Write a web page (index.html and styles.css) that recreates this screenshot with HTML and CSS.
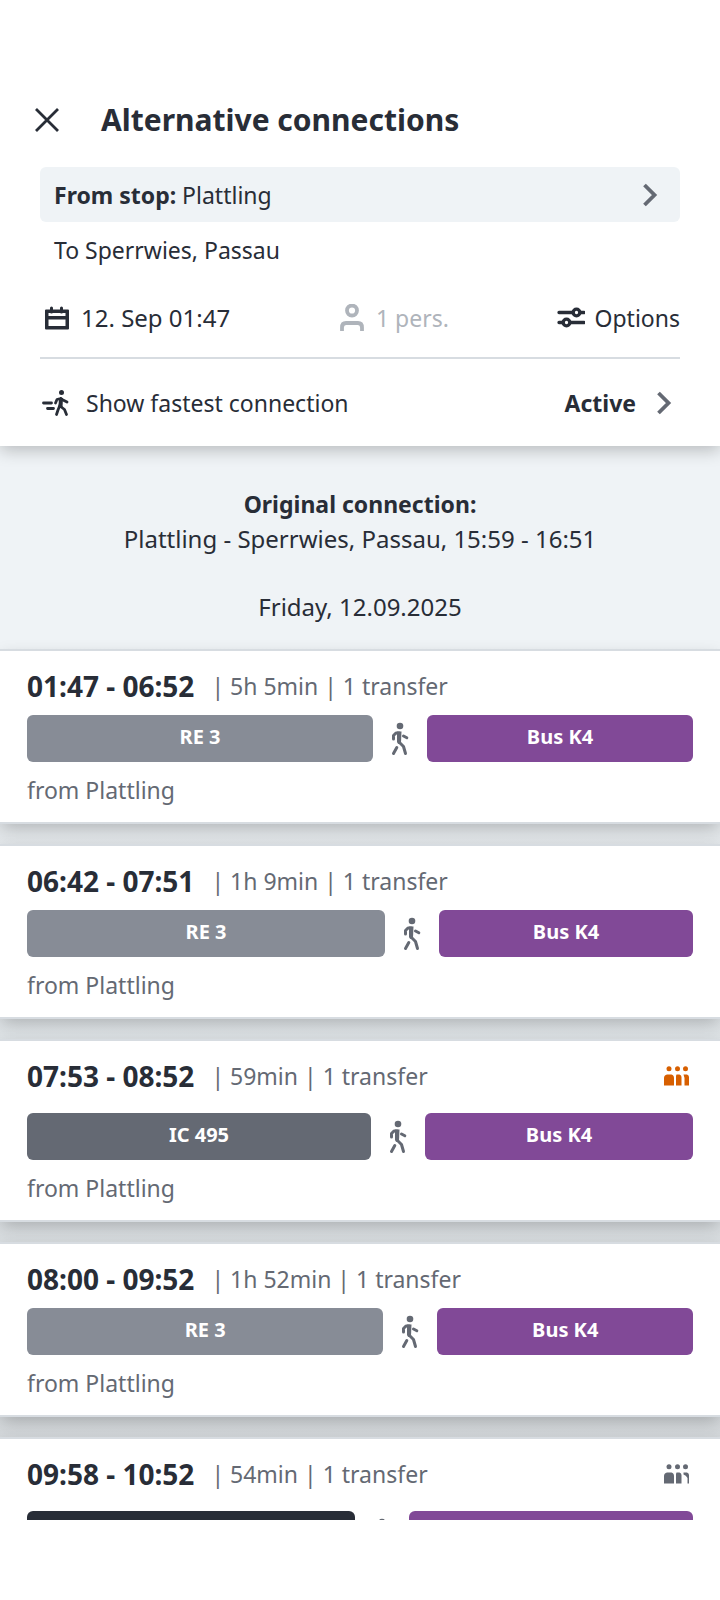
FILE: index.html
```html
<!DOCTYPE html>
<html lang="en">
<head>
<meta charset="utf-8">
<meta name="viewport" content="width=device-width, initial-scale=1">
<title>Alternative connections</title>
<link rel="stylesheet" href="styles.css">
</head>
<body>
<svg class="sprite" aria-hidden="true">
  <symbol id="walk" viewBox="0 0 18 34">
    <circle cx="9" cy="4" r="3.3"/>
    <g fill="none" stroke="currentColor" stroke-width="3" stroke-linecap="round" stroke-linejoin="round">
      <path d="M2.500 17V13.500L5 11H8.500"/><path d="M12.500 14L15.800 15.800"/><path d="M5.800 25.500L2.500 31.500"/><path d="M8.500 20.500L12.500 24.500L14.500 31.500"/>
    </g>
    <path d="M6 9.500H10.500L10 20.500L8.500 22H7.500Q6 21 6 19.500Z"/>
  </symbol>
  <symbol id="chevron" viewBox="0 0 24 24"><path d="M6.500 2L16.500 12L6.500 22" fill="none" stroke="currentColor" stroke-width="3.800"/></symbol>
  <symbol id="load-medium" viewBox="0 0 26 20">
    <circle cx="5" cy="2.700" r="2.500"/><circle cx="13.500" cy="2.700" r="2.500"/><circle cx="21.500" cy="2.700" r="2.500"/>
    <path d="M3 8.500H7.500Q10 9 10 12V19.500H0V12Q0 9 3 8.500ZM12.500 8.500H15.500Q17.500 9 17.500 11V19.500H12V10ZM19.500 8.500H23Q25 9 25 11V19.500H20.500V12Z"/>
  </symbol>
  <symbol id="load-low" viewBox="0 0 26 20">
    <circle cx="5" cy="2.700" r="2.500"/><circle cx="13.500" cy="2.700" r="2.500"/><circle cx="21.500" cy="2.700" r="2.500"/>
    <path d="M3 8.500H7.500Q10 9 10 12V19.500H0V12Q0 9 3 8.500ZM12.500 8.500H15.500Q17.500 9 17.500 11V19.500H12V10ZM19.500 8.500H23Q25 9 25 11V19.500H23.500V14Q22 11 19.500 10.500Z"/>
  </symbol>
</svg>
<div class="screen">
  <header class="search">
    <div class="title-bar">
      <button class="close" type="button" aria-label="Close"><svg class="icon-close" viewBox="0 0 24 24"><path d="M1 1L23 23M23 1L1 23" fill="none" stroke="currentColor" stroke-width="2.800"/></svg></button>
      <h1>Alternative connections</h1>
    </div>
    <div class="form">
      <button class="from" type="button"><span><b>From stop:</b> Plattling</span><svg class="chevron"><use href="#chevron"/></svg></button>
      <p class="to">To Sperrwies, Passau</p>
      <div class="settings">
        <button class="setting date" type="button">
          <svg class="icon" viewBox="0 0 28 28"><path d="M8.500 4V8M18.500 4V8" stroke="currentColor" stroke-width="3" stroke-linecap="round"/><path fill-rule="evenodd" d="M3 5.500H25Q26 5.500 26 6.500V24.500Q26 25.500 25 25.500H3Q2 25.500 2 24.500V6.500Q2 5.500 3 5.500ZM5.500 9V12H22.500V9ZM5.500 15.500V22H22.500V15.500Z"/></svg>
          12. Sep 01:47</button>
        <button class="setting" type="button" disabled>
          <svg class="icon" viewBox="0 0 28 28"><g fill="none" stroke="currentColor" stroke-width="3.800"><circle cx="14" cy="6.500" r="5"/><path d="M4 27V23.500Q4 19 8 19H20Q24 19 24 23.500V27"/></g></svg>
          1 pers.</button>
        <button class="setting" type="button">
          <svg class="icon" viewBox="0 0 28 28"><g fill="none" stroke="currentColor" stroke-width="3.300" stroke-linecap="round"><path d="M2 8.500H16M24 8.500H27M2 18.500H6M14 18.500H27"/><circle cx="19.500" cy="8.500" r="3.300"/><circle cx="9.500" cy="18.500" r="3.300"/></g></svg>
          Options</button>
      </div>
      <button class="fastest" type="button">
        <svg class="icon" viewBox="0 0 28 28"><circle cx="19.500" cy="3.500" r="2.500"/><g fill="none" stroke="currentColor" stroke-width="2.800" stroke-linecap="round" stroke-linejoin="round"><path d="M1.500 14H9.500M5.500 19.500H11.500"/><path d="M13.500 14L15 10.500L18.500 9.500L21 11L25 13M19 9.500L18 17L22.500 20.500L24.500 25.500M18 16L16 21L14.500 25.500"/></g><path d="M17 9H21L20.500 18H16.500Z"/></svg>
        <span class="fastest-label">Show fastest connection</span><b>Active</b>
        <svg class="chevron"><use href="#chevron"/></svg>
      </button>
    </div>
  </header>
  <main class="results">
    <div class="original">
      <h2>Original connection:</h2>
      <p>Plattling - Sperrwies, Passau, 15:59 - 16:51</p>
      <p class="day">Friday, 12.09.2025</p>
    </div>
    <article class="card">
      <div class="summary"><b>01:47 - 06:52</b><span>| 5h 5min | 1 transfer</span></div>
      <div class="legs"><span class="leg regional" style="flex-grow:346">RE 3</span><svg class="walk"><use href="#walk"/></svg><span class="leg bus" style="flex-grow:266">Bus K4</span></div>
      <p class="origin">from Plattling</p>
    </article>
    <article class="card">
      <div class="summary"><b>06:42 - 07:51</b><span>| 1h 9min | 1 transfer</span></div>
      <div class="legs"><span class="leg regional" style="flex-grow:358">RE 3</span><svg class="walk"><use href="#walk"/></svg><span class="leg bus" style="flex-grow:254">Bus K4</span></div>
      <p class="origin">from Plattling</p>
    </article>
    <article class="card with-load">
      <div class="summary"><b>07:53 - 08:52</b><span>| 59min | 1 transfer</span><svg class="load high"><use href="#load-medium"/></svg></div>
      <div class="legs"><span class="leg intercity" style="flex-grow:344">IC 495</span><svg class="walk"><use href="#walk"/></svg><span class="leg bus" style="flex-grow:268">Bus K4</span></div>
      <p class="origin">from Plattling</p>
    </article>
    <article class="card">
      <div class="summary"><b>08:00 - 09:52</b><span>| 1h 52min | 1 transfer</span></div>
      <div class="legs"><span class="leg regional" style="flex-grow:357">RE 3</span><svg class="walk"><use href="#walk"/></svg><span class="leg bus" style="flex-grow:256">Bus K4</span></div>
      <p class="origin">from Plattling</p>
    </article>
    <article class="card with-load">
      <div class="summary"><b>09:58 - 10:52</b><span>| 54min | 1 transfer</span><svg class="load"><use href="#load-low"/></svg></div>
      <div class="legs"><span class="leg express" style="flex-grow:328"></span><svg class="walk"><use href="#walk"/></svg><span class="leg bus" style="flex-grow:284"></span></div>
    </article>
  </main>
</div>
</body>
</html>
```
FILE: styles.css
```css
* { box-sizing: border-box; }
body {
  margin: 0;
  background: #fff;
  color: #282d37;
  font-family: "Noto Sans", "Open Sans", sans-serif;
  font-size: 23px;
  line-height: 32px;
}
h1, h2, p { margin: 0; }
button {
  padding: 0;
  border: 0;
  background: none;
  color: inherit;
  font: inherit;
  text-align: left;
}
svg { display: block; flex: none; fill: currentColor; }
.sprite { position: absolute; width: 0; height: 0; }
.screen {
  display: flex;
  flex-direction: column;
  height: 100vh;
  padding: 80px 0;
}
.search {
  position: relative;
  z-index: 1;
  flex: none;
  background: #fff;
  box-shadow: 0 4px 16px rgba(0, 0, 0, .24);
  clip-path: inset(0 0 -32px 0);
}
.title-bar {
  display: flex;
  align-items: center;
  gap: 42px;
  height: 80px;
  padding: 0 35px;
}
.icon-close { width: 24px; height: 24px; }
h1 { font-size: 30px; line-height: 40px; }
.form { padding: 7px 40px 0; }
.from {
  display: flex;
  align-items: center;
  justify-content: space-between;
  width: 100%;
  height: 55px;
  padding: 0 18px 0 14px;
  border-radius: 6px;
  background: #eff3f6;
}
.chevron { width: 24px; height: 24px; color: #646973; }
.to { padding: 12px 14px; }
.settings {
  display: flex;
  align-items: center;
  justify-content: space-between;
  height: 81px;
  padding-left: 3px;
  border-bottom: 2px solid #d7dce1;
}
.settings, .fastest { position: relative; }
.setting { display: flex; align-items: center; gap: 10px; }
.date { font-size: 24px; }
.setting:disabled { color: #afb4bb; }
.icon { width: 28px; height: 28px; }
.fastest {
  display: flex;
  align-items: center;
  gap: 16px;
  width: 100%;
  height: 87px;
  padding: 0 4px 0 2px;
}
.fastest-label { flex: 1; }
.results {
  flex: 1;
  min-height: 0;
  overflow: hidden;
  background: linear-gradient(#eff3f6 200px, #e2e6e9 380px, #dce1e4 600px, #d3d7da 1000px);
}
.original { padding: 41px 16px 25px; text-align: center; font-size: 24px; }
h2 { font-size: 23px; line-height: 35px; }
.original p { line-height: 34px; }
.original .day { margin-top: 34px; }
.card {
  margin-bottom: 20px;
  padding: 19px 27px 16px;
  border: solid #d7dce1;
  border-width: 2px 0;
  background: #fff;
  color: #646973;
  box-shadow: 0 6px 16px -2px rgba(0, 0, 0, .22);
}
.summary { display: flex; align-items: center; gap: 17px; height: 32px; }
.summary b { color: #282d37; font-size: 28px; }
.legs { display: flex; margin: 13px 0 12px; }
.with-load .legs { margin-top: 21px; }
.leg {
  flex: 1 1 0;
  height: 47px;
  border-radius: 6px;
  color: #fff;
  font-size: 20px;
  font-weight: 700;
  line-height: 44px;
  text-align: center;
}
.regional { background: #878c96; }
.intercity { background: #646973; }
.express { background: #282d37; }
.bus { background: #814997; }
.walk { width: 18px; height: 34px; margin: 7px 18px 0; }
.load { width: 26px; height: 20px; margin: 0 3px 0 auto; }
.high { color: #d75f00; }
```
